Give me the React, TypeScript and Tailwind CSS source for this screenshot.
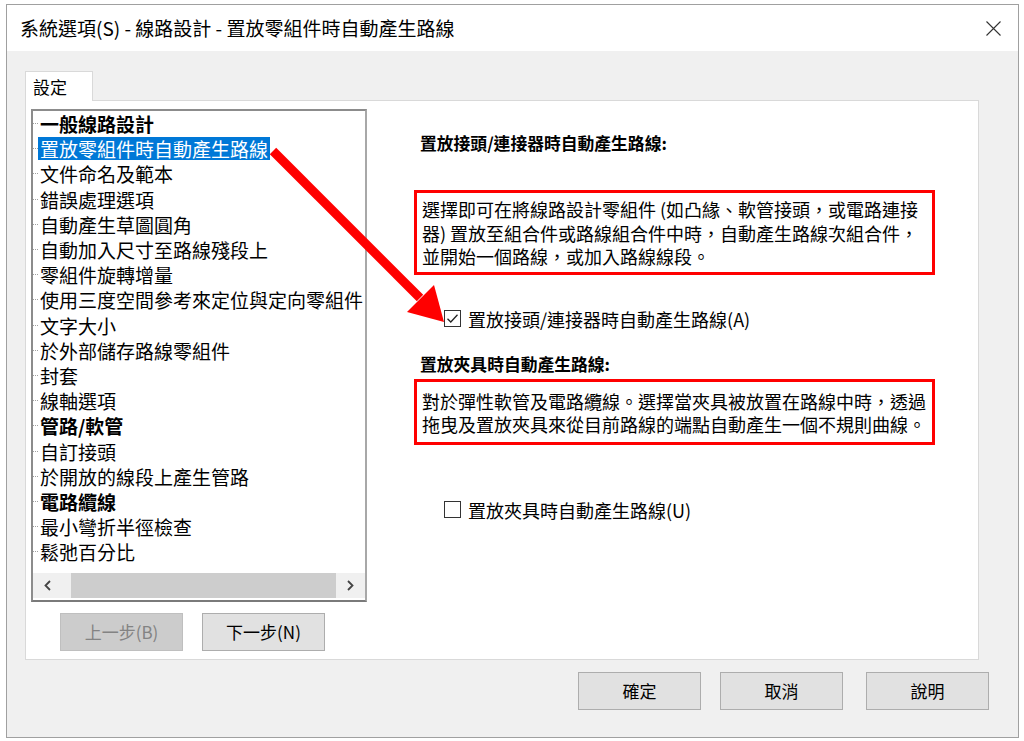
import React from "react";

const treeItems = [
  { t: "一般線路設計", bold: true },
  { t: "置放零組件時自動產生路線", selected: true },
  { t: "文件命名及範本" },
  { t: "錯誤處理選項" },
  { t: "自動產生草圖圓角" },
  { t: "自動加入尺寸至路線殘段上" },
  { t: "零組件旋轉增量" },
  { t: "使用三度空間參考來定位與定向零組件" },
  { t: "文字大小" },
  { t: "於外部儲存路線零組件" },
  { t: "封套" },
  { t: "線軸選項" },
  { t: "管路/軟管", bold: true },
  { t: "自訂接頭" },
  { t: "於開放的線段上產生管路" },
  { t: "電路纜線", bold: true },
  { t: "最小彎折半徑檢查" },
  { t: "鬆弛百分比" },
];

function Checkbox({ checked }: { checked?: boolean }) {
  return (
    <span className="w-[17px] h-[17px] border border-[#333333] bg-white flex items-center justify-center shrink-0">
      {checked && (
        <svg width="13" height="13" viewBox="0 0 13 13" fill="none">
          <path d="M1.5 6.8 L4.8 10 L11.5 2.8" stroke="#222" strokeWidth="1.3" />
        </svg>
      )}
    </span>
  );
}

function Button({ label, disabled, className = "" }: { label: string; disabled?: boolean; className?: string }) {
  return (
    <div
      className={`w-[123px] h-[38px] flex items-center justify-center border text-[17px] ${
        disabled
          ? "bg-[#cccccc] border-[#bfbfbf] text-[#838383]"
          : "bg-[#e1e1e1] border-[#adadad] text-black"
      } ${className}`}
    >
      {label}
    </div>
  );
}

export default function App() {
  return (
    <div
      className="relative w-[1024px] h-[741px] bg-white overflow-hidden pt-[4px] pl-[6px] text-black"
      style={{ fontFamily: '"Noto Sans CJK TC", "Noto Sans", sans-serif' }}
    >
      <div className="w-[1013px] h-[734px] border border-[#a0a0a0] flex flex-col">
        {/* title bar */}
        <div className="h-[46px] bg-white flex items-center justify-between pl-[13px] pr-[17px] shrink-0">
          <span className="text-[19px] leading-none -mt-[2px]">系統選項(S) - 線路設計 - 置放零組件時自動產生路線</span>
          <svg width="15" height="15" viewBox="0 0 15 15">
            <path d="M0.5 0.5 L14.5 14.5 M14.5 0.5 L0.5 14.5" stroke="#333" strokeWidth="1.1" />
          </svg>
        </div>

        {/* body */}
        <div className="flex-1 bg-[#f0f0f0] pl-[18px] pt-[20px]">
          <div className="w-[68px] h-[30px] bg-white border border-b-0 border-[#d9d9d9] pl-[7px] text-[17px] leading-[30px] relative z-10 -mb-px">
            設定
          </div>
          <div className="w-[954px] h-[560px] bg-white border border-[#d9d9d9] flex">
            {/* left column */}
            <div className="pl-[5px] pt-[8px] w-[341px] shrink-0">
              <div className="w-[336px] h-[493px] border-2 border-t-[#8c8c8c] border-l-[#8c8c8c] border-r-[#a8a8a8] border-b-[#7a7a7a] flex flex-col">
                <div className="flex-1 overflow-hidden">
                  {treeItems.map((it) => (
                    <div key={it.t} className="h-[25.2px] flex items-center whitespace-nowrap">
                      <span className="w-[5px] border-t border-dotted border-[#a0a0a0] shrink-0" />
                      <span
                        className={`px-[2px] text-[19px] leading-[23px] ${it.bold ? "font-bold" : ""} ${
                          it.selected ? "bg-[#0078d7] text-white" : ""
                        }`}
                      >
                        {it.t}
                      </span>
                    </div>
                  ))}
                </div>
                <div className="h-[25px] mb-[2px] bg-[#f0f0f0] flex shrink-0">
                  <div className="w-[29px] flex items-center justify-center">
                    <svg width="9" height="11" viewBox="0 0 9 11">
                      <path d="M7 1 L2.5 5.5 L7 10" stroke="#444" strokeWidth="1.8" fill="none" />
                    </svg>
                  </div>
                  <div className="flex-1 flex items-stretch">
                    <div className="ml-[9px] w-[265px] bg-[#cdcdcd]" />
                  </div>
                  <div className="w-[29px] flex items-center justify-center">
                    <svg width="9" height="11" viewBox="0 0 9 11">
                      <path d="M2 1 L6.5 5.5 L2 10" stroke="#444" strokeWidth="1.8" fill="none" />
                    </svg>
                  </div>
                </div>
              </div>
              <div className="mt-[11px] ml-[29px] flex gap-[19px]">
                <Button label="上一步(B)" disabled />
                <Button label="下一步(N)" />
              </div>
            </div>

            {/* right column */}
            <div className="ml-[47px] w-[521px]">
              <div className="mt-[30px] pl-[6px] text-[16.8px] leading-[24px] font-bold">置放接頭/連接器時自動產生路線:</div>
              <div className="mt-[35px] border-[3px] border-[#ff0000] pl-[5px] pt-[5px] pb-[3px] text-[18px] leading-[23.5px] whitespace-nowrap">
                選擇即可在將線路設計零組件 (如凸緣、軟管接頭，或電路連接
                <br />
                器) 置放至組合件或路線組合件中時，自動產生路線次組合件，
                <br />
                並開始一個路線，或加入路線線段。
              </div>
              <div className="mt-[32px] ml-[30px] h-[24px] flex items-center gap-[7px]">
                <Checkbox checked />
                <span className="text-[18px] leading-[24px]">置放接頭/連接器時自動產生路線(A)</span>
              </div>
              <div className="mt-[21px] pl-[6px] text-[16.8px] leading-[24px] font-bold">置放夾具時自動產生路線:</div>
              <div className="mt-[3px] border-[3px] border-[#ff0000] pl-[5px] pt-[8px] pb-[5px] text-[18px] leading-[23.5px] whitespace-nowrap">
                對於彈性軟管及電路纜線。選擇當夾具被放置在路線中時，透過
                <br />
                拖曳及置放夾具來從目前路線的端點自動產生一個不規則曲線。
              </div>
              <div className="mt-[53px] ml-[30px] h-[24px] flex items-center gap-[7px]">
                <Checkbox />
                <span className="text-[18px] leading-[24px]">置放夾具時自動產生路線(U)</span>
              </div>
            </div>
          </div>

          {/* bottom buttons */}
          <div className="mt-[12px] flex pl-[553px]">
            <Button label="確定" className="w-[122px]" />
            <Button label="取消" className="w-[122px] ml-[19px]" />
            <Button label="說明" className="w-[122px] ml-[23px]" />
          </div>
        </div>
      </div>

      {/* annotation arrow */}
      <svg className="absolute left-0 top-0 pointer-events-none" width="1024" height="741">
        <line x1="273" y1="151" x2="420" y2="298" stroke="#ff0000" strokeWidth="9" />
        <polygon points="444,322 434,285 407,312" fill="#ff0000" />
      </svg>
    </div>
  );
}
